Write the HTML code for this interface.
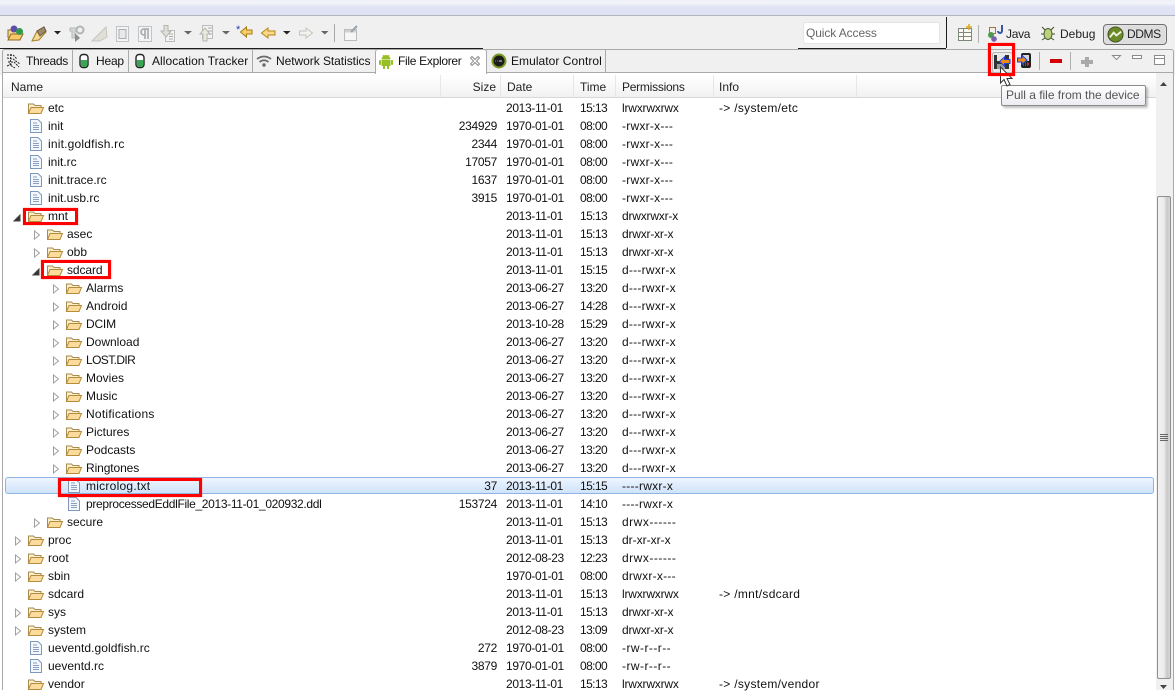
<!DOCTYPE html>
<html><head><meta charset="utf-8">
<style>
html,body{margin:0;padding:0;background:#fff}
body{width:1175px;height:690px;position:relative;overflow:hidden;font-family:"Liberation Sans",sans-serif;font-size:12px;color:#111}
.a{position:absolute}
.r{position:absolute;left:0;width:1155px;height:18px;line-height:18px;white-space:nowrap}
.r span{position:absolute;top:0}
.r svg{position:absolute;top:1px}
.r svg.ar{top:5px}
.r svg.ex{top:7px}
.s{right:658px;letter-spacing:-.3px}
.d{left:506px;letter-spacing:-.35px}
.t{left:580px;letter-spacing:-.6px}
.p{left:622px;letter-spacing:-.2px}
.q{left:622px;letter-spacing:.25px}
.i{left:719px;letter-spacing:.3px}
.tab{position:absolute;top:50px;height:22px;line-height:22px;white-space:nowrap}
.tab span{position:absolute;top:0}
.hd{position:absolute;top:79px;line-height:16px;color:#222}
.sep{position:absolute;top:75px;width:1px;height:22px;background:#e6e6e6}
.rb{position:absolute;border:3px solid #f00;box-sizing:border-box;box-shadow:0 0 1px #f66}
</style></head><body>
<svg width="0" height="0" style="position:absolute">
<defs>
<symbol id="fo" viewBox="0 0 18 16"><path d="M1.500 13.500V4h5l1.500 1.500H14V7" fill="#fbeecb" stroke="#a98a4f"/><path d="M1.500 13.500L4 7.500H16.500L14 13.500Z" fill="#fbdc9c" stroke="#b58c3c"/></symbol>
<symbol id="fi" viewBox="0 0 16 16"><path d="M2.500 1.500H10L13.500 5V14.500H2.500Z" fill="#f3f6fb" stroke="#7f97bb"/><path d="M5 5H9M5 7.500H11M5 9.500H11M5 11.500H11" stroke="#8aa0c2"/></symbol>
<symbol id="ar" viewBox="0 0 8 10"><path d="M1.500 1V9L6.500 5Z" fill="#fff" stroke="#a0a0a0"/></symbol>
<symbol id="ex" viewBox="0 0 8 8"><path d="M7 1V7H1Z" fill="#333" stroke="#444"/></symbol>
<symbol id="can" viewBox="0 0 12 16"><rect x="2" y="1.500" width="8" height="13" rx="3" fill="#fff" stroke="#222" stroke-width="1.400"/><path d="M2.800 7H9.200V12a2 2 0 0 1-2 2H4.800a2 2 0 0 1-2-2Z" fill="#3aa655"/></symbol>
<symbol id="droid" viewBox="0 0 16 16"><path d="M3.500 6.500a4.500 4.500 0 0 1 9 0Z" fill="#97c024"/><path d="M5 2L6 3.500M11 2L10 3.500" stroke="#97c024"/><rect x="3.500" y="7" width="9" height="6" fill="#97c024"/><rect x="1" y="7" width="2" height="5" rx="1" fill="#97c024"/><rect x="13" y="7" width="2" height="5" rx="1" fill="#97c024"/><rect x="5" y="13" width="2" height="3" fill="#97c024"/><rect x="9" y="13" width="2" height="3" fill="#97c024"/></symbol>
</defs></svg>

<!-- top band -->
<div class="a" style="left:0;top:0;width:1175px;height:15px;background:linear-gradient(#eef0f8 0,#f4f5fb 3px,#dfe3f3 7px,#dfe3f3 100%)"></div>
<div class="a" style="left:0;top:15px;width:1175px;height:1px;background:#b3b3bb"></div>
<div class="a" style="left:0;top:16px;width:1175px;height:59px;background:#f0f0f0"></div>

<!-- toolbar icons -->
<svg class="a" style="left:0;top:16px" width="360" height="34" viewBox="0 0 360 34">
<path d="M8 22V14h5l1 1h6v5" fill="#f6d98f" stroke="#8f6a22"/><path d="M8 24L11 18H23L20 24Z" fill="#f8c96b" stroke="#8f6a22"/><circle cx="14" cy="13" r="3.500" fill="#5d4fa8"/><circle cx="19.500" cy="15.500" r="3.500" fill="#2f9a4f"/>
<path d="M32 25L37 15L44 11L46 16L39 24Z" fill="#f5d98e" stroke="#a4812f"/><path d="M37 15L44 11L46 15L40 20Z" fill="#a08a6c" stroke="#6d5b47"/><path d="M54 15H61L57.500 18.500Z" fill="#222"/>
<path d="M70 12H77V15H75V22H72V15H70Z" fill="#d5d8d8" stroke="#b5b9b9"/><circle cx="80" cy="14" r="3.500" fill="none" stroke="#b0b5b5" stroke-width="2"/><path d="M75 17V26L80 22Z" fill="#8d8d8d"/>
<path d="M92 25L106 11L107 21L100 25Z" fill="#dfdfd8" stroke="#c6c6c0"/>
<rect x="116.500" y="10.500" width="12" height="15" fill="#f4f4f4" stroke="#c0c4c6"/><rect x="119" y="13.500" width="7" height="9" fill="#e8e8e8" stroke="#a9aeb0"/>
<rect x="138.500" y="10.500" width="13" height="15" fill="#f4f4f4" stroke="#c0c4c6"/><path d="M145 13V23M148 13V23M149 13H144a3 3 0 0 0 0 6h1" fill="none" stroke="#a5a9ac" stroke-width="1.600"/>
<rect x="165.500" y="14.500" width="9" height="11" fill="#f4f4f4" stroke="#bbb"/><path d="M164 9.500H168V15H171L166 21L161 15H164Z" fill="#e0e0da" stroke="#b5b5ad"/><path d="M169 18H173M169 20.500H173M169 23H173" stroke="#aaa"/>
<path d="M184 15H192L188 18.500Z" fill="#666"/>
<rect x="202.500" y="9.500" width="10" height="13" fill="#f4f4f4" stroke="#bbb"/><path d="M203 25V18H200L205 12L210 18H207V25Z" fill="#e9e9e0" stroke="#b5b5ad"/><path d="M208 12H212M208 15H212M208 18H212" stroke="#aaa"/>
<path d="M222 15H230L226 18.500Z" fill="#666"/>
<path d="M240.500 16L246.500 11V14H252V18H246.500V21Z" fill="#f8cf6b" stroke="#a77a14"/><text x="236" y="17" font-size="11" fill="#2a3fb0" font-family="Liberation Sans">*</text>
<path d="M261.500 17L268 12V15H275V19H268V22Z" fill="#fbd98b" stroke="#b58414"/>
<path d="M283 15H290.500L286.800 18.500Z" fill="#222"/>
<path d="M312.500 17L306 12V15H299.500V19H306V22Z" fill="#f2f2ee" stroke="#c3c3bc"/>
<path d="M321 15H328.500L324.800 18.500Z" fill="#666"/>
<rect x="334" y="8" width="1" height="18" fill="#a8a8a8"/>
<rect x="344.500" y="13.500" width="12" height="11" fill="#f6f6f6" stroke="#bbb"/><rect x="345" y="14" width="11" height="2.500" fill="#d0d3d6"/><path d="M351 16L357 10" stroke="#9aa2a6" stroke-width="2"/>
</svg>

<!-- black line under toolbar -->
<div class="a" style="left:0;top:48px;width:483px;height:1px;background:#1c1c1c"></div>
<div class="a" style="left:798px;top:48px;width:148px;height:1px;background:#1c1c1c"></div>
<div class="a" style="left:946px;top:17px;width:1px;height:31px;background:#1c1c1c"></div>

<!-- quick access -->
<div class="a" style="left:803px;top:22px;width:135px;height:20px;background:#fff;border:1px solid #e4e4e4;border-radius:2px;line-height:20px;color:#666;text-indent:2px;font-size:12px;letter-spacing:-.1px">Quick Access</div>

<!-- perspectives -->
<svg class="a" style="left:950px;top:16px" width="150" height="34" viewBox="0 0 150 34">
<rect x="8.500" y="12.500" width="13" height="12" fill="#fdfdf5" stroke="#7d8a7b"/><path d="M8 16.500H21M13.500 12V24M8 20.500H21" stroke="#7d8a7b"/><path d="M19 8V14M16 11H22" stroke="#e0a818" stroke-width="1.500"/>
<rect x="28" y="9" width="1" height="18" fill="#b0b0b0"/>
<rect x="39.500" y="11.500" width="6" height="6" fill="none" stroke="#a5743a"/><circle cx="41" cy="19" r="3" fill="#4f9a4e"/><circle cx="44" cy="23" r="2.800" fill="#7c5cad"/><path d="M52 9V15a2 2 0 0 1-4 0" fill="none" stroke="#3556a6" stroke-width="2"/>
<ellipse cx="98" cy="18" rx="4" ry="5.500" fill="#bcd27a" stroke="#495b2a"/><path d="M92 11L95 14M104 11L101 14M91 18H94M105 18H102M92 24L95 22M104 24L101 22" stroke="#3f4a2f"/>
</svg>
<div class="a" style="left:1006px;top:26px;line-height:16px;color:#222;letter-spacing:-.3px">Java</div>
<div class="a" style="left:1060px;top:26px;line-height:16px;color:#222">Debug</div>
<div class="a" style="left:1103px;top:24px;width:62px;height:19px;border:1px solid #6f6f6f;border-radius:4px;background:rgba(205,205,205,.55);box-shadow:inset 0 0 1px #fff"></div>
<div class="a" style="left:1127px;top:26px;line-height:16px;color:#222;letter-spacing:-.4px">DDMS</div>
<svg class="a" style="left:1107px;top:26px" width="17" height="17" viewBox="0 0 18 18"><circle cx="9" cy="9" r="8" fill="#6a8a2a" stroke="#3f4f1d"/><path d="M3 12L7 7L10 10L15 6" fill="none" stroke="#f0f3de" stroke-width="2"/></svg>

<!-- panel frame -->
<div class="a" style="left:2px;top:49px;width:1172px;height:641px;border:1px solid #a9a9a9;border-bottom:0;border-radius:3px 3px 0 0;box-sizing:border-box"></div>
<div class="a" style="left:3px;top:72px;width:1170px;height:1px;background:#a9a9a9"></div>
<div class="a" style="left:3px;top:73px;width:1170px;height:617px;background:#fff"></div>

<!-- tabs -->
<div class="a" style="left:72px;top:50px;width:1px;height:22px;background:#a9a9a9"></div>
<div class="a" style="left:128px;top:50px;width:1px;height:22px;background:#a9a9a9"></div>
<div class="a" style="left:252px;top:50px;width:1px;height:22px;background:#a9a9a9"></div>
<div class="a" style="left:375px;top:49px;width:112px;height:25px;background:#fff;border:1px solid #a9a9a9;border-bottom:0;border-radius:3px 3px 0 0;box-sizing:border-box"></div>
<div class="a" style="left:605px;top:50px;width:1px;height:22px;background:#a9a9a9"></div>
<div class="tab" style="left:0"><span style="left:26px;letter-spacing:-.3px">Threads</span><span style="left:96px;letter-spacing:-.2px">Heap</span><span style="left:152px;letter-spacing:.05px">Allocation Tracker</span><span style="left:276px;letter-spacing:-.05px">Network Statistics</span><span style="left:398px;letter-spacing:-.3px">File Explorer</span><span style="left:511px;letter-spacing:.05px">Emulator Control</span></div>
<svg class="a" style="left:6px;top:53px" width="16" height="16" viewBox="0 0 16 16"><path d="M1 2L7 2L11 6M1 5L7 6L14 11M2 9L8 9L13 14M5 1L4 12L9 15M1 13L6 11" fill="none" stroke="#222" stroke-dasharray="2 1"/></svg>
<svg class="a" style="left:78px;top:53px" width="13" height="16"><use href="#can" width="12" height="16"/></svg>
<svg class="a" style="left:134px;top:53px" width="13" height="16"><use href="#can" width="12" height="16"/></svg>
<svg class="a" style="left:256px;top:54px" width="16" height="14" viewBox="0 0 16 14"><path d="M1 5Q8 0 15 5M3.500 8Q8 4.500 12.500 8" fill="none" stroke="#6a6a6a" stroke-width="1.800"/><circle cx="8" cy="11" r="1.700" fill="#6a6a6a"/></svg>
<svg class="a" style="left:378px;top:53px" width="16" height="16"><use href="#droid" width="16" height="16"/></svg>
<svg class="a" style="left:469px;top:55px" width="12" height="12" viewBox="0 0 12 12"><path d="M1.500 3L3 1.500L6 4.500L9 1.500L10.500 3L7.500 6L10.500 9L9 10.500L6 7.500L3 10.500L1.500 9L4.500 6Z" fill="#fff" stroke="#8d8d8d"/></svg>
<svg class="a" style="left:491px;top:53px" width="16" height="16" viewBox="0 0 16 16"><circle cx="8" cy="8" r="7.500" fill="#7d9a24"/><circle cx="8" cy="8" r="5.500" fill="#1c1c1c"/><path d="M4.500 8H5M6.300 8H6.800M8 8H11" stroke="#ddd"/></svg>

<!-- view toolbar -->
<svg class="a" style="left:988px;top:50px" width="187" height="25" viewBox="0 0 187 25">
<rect x="4.500" y="2.500" width="20" height="20" rx="2" fill="#e9e9e9" stroke="#b6b6b6"/>
<path d="M6 5H21V19H6Z" fill="#333"/><rect x="9" y="5" width="8" height="6" fill="#e8e8e8"/><rect x="9" y="14" width="8" height="5" fill="#9a9a9a"/>
<path d="M11.500 11.500L16.500 7V9.500H22V13.500H16.500V16Z" fill="#f08a12" stroke="#1e40d8"/>
<rect x="33" y="3" width="10" height="15" rx="2" fill="#222"/><rect x="35" y="5" width="6" height="6" fill="#d6d6e4"/><path d="M35 13H41M35 15H41" stroke="#888" stroke-dasharray="1 1"/><rect x="39" y="13" width="2" height="2" fill="#d22"/>
<path d="M39 10L34 5.500V8H29.500V12H34V14.500Z" fill="#f08a12" stroke="#1e40d8"/>
<rect x="51" y="2" width="1" height="18" fill="#b0b0b0"/>
<rect x="62" y="9" width="12" height="4" fill="#d20000"/>
<rect x="82" y="2" width="1" height="18" fill="#b0b0b0"/>
<path d="M97 7H101V10H105V14H101V17H97V14H93V10H97Z" fill="#a9a9a9"/>
<path d="M124.500 5.500H132.500L128.500 9.500Z" fill="#fff" stroke="#8a8a8a"/>
<rect x="144.500" y="5.500" width="9" height="3" fill="#fff" stroke="#8a8a8a"/>
<rect x="166.500" y="5.500" width="10" height="9" fill="#fff" stroke="#8a8a8a"/><path d="M166 8.500H176" stroke="#8a8a8a"/>
</svg>

<!-- table header -->
<div class="a" style="left:3px;top:75px;width:1153px;height:22px;background:linear-gradient(#fff,#fafafa 40%,#f1f1f1)"></div>
<div class="a" style="left:3px;top:97px;width:1153px;height:1px;background:#d8d8d8"></div>
<div class="sep" style="left:440px"></div><div class="sep" style="left:500px"></div><div class="sep" style="left:573px"></div><div class="sep" style="left:615px"></div><div class="sep" style="left:713px"></div><div class="sep" style="left:856px"></div>
<div class="hd" style="left:11px">Name</div>
<div class="hd" style="right:679px">Size</div>
<div class="hd" style="left:507px">Date</div>
<div class="hd" style="left:580px">Time</div>
<div class="hd" style="left:622px;letter-spacing:-.25px">Permissions</div>
<div class="hd" style="left:719px">Info</div>

<!-- selection -->
<div class="a" style="left:5px;top:477px;width:1149px;height:17px;box-sizing:border-box;border:1px solid #8fb4e4;border-radius:3px;background:linear-gradient(#eef5fe,#cfe3fb)"></div>

<!-- rows -->
<div class="r" style="top:99px"><svg style="left:27px" width="18" height="16"><use href="#fo"/></svg><span style="left:48px">etc</span><span class="d">2013-11-01</span><span class="t">15:13</span><span class="p">lrwxrwxrwx</span><span class="i">-&gt; /system/etc</span></div>
<div class="r" style="top:117px"><svg style="left:28px" width="16" height="16"><use href="#fi"/></svg><span style="left:48px">init</span><span class="s">234929</span><span class="d">1970-01-01</span><span class="t">08:00</span><span class="q">-rwxr-x---</span></div>
<div class="r" style="top:135px"><svg style="left:28px" width="16" height="16"><use href="#fi"/></svg><span style="left:48px;letter-spacing:.2px">init.goldfish.rc</span><span class="s">2344</span><span class="d">1970-01-01</span><span class="t">08:00</span><span class="q">-rwxr-x---</span></div>
<div class="r" style="top:153px"><svg style="left:28px" width="16" height="16"><use href="#fi"/></svg><span style="left:48px">init.rc</span><span class="s">17057</span><span class="d">1970-01-01</span><span class="t">08:00</span><span class="q">-rwxr-x---</span></div>
<div class="r" style="top:171px"><svg style="left:28px" width="16" height="16"><use href="#fi"/></svg><span style="left:48px">init.trace.rc</span><span class="s">1637</span><span class="d">1970-01-01</span><span class="t">08:00</span><span class="q">-rwxr-x---</span></div>
<div class="r" style="top:189px"><svg style="left:28px" width="16" height="16"><use href="#fi"/></svg><span style="left:48px">init.usb.rc</span><span class="s">3915</span><span class="d">1970-01-01</span><span class="t">08:00</span><span class="q">-rwxr-x---</span></div>
<div class="r" style="top:207px"><svg class="ex" style="left:13px" width="8" height="8"><use href="#ex"/></svg><svg style="left:27px" width="18" height="16"><use href="#fo"/></svg><span style="left:48px">mnt</span><span class="d">2013-11-01</span><span class="t">15:13</span><span class="p">drwxrwxr-x</span></div>
<div class="r" style="top:225px"><svg class="ar" style="left:33px" width="8" height="10"><use href="#ar"/></svg><svg style="left:46px" width="18" height="16"><use href="#fo"/></svg><span style="left:67px">asec</span><span class="d">2013-11-01</span><span class="t">15:13</span><span class="p">drwxr-xr-x</span></div>
<div class="r" style="top:243px"><svg class="ar" style="left:33px" width="8" height="10"><use href="#ar"/></svg><svg style="left:46px" width="18" height="16"><use href="#fo"/></svg><span style="left:67px">obb</span><span class="d">2013-11-01</span><span class="t">15:13</span><span class="p">drwxr-xr-x</span></div>
<div class="r" style="top:261px"><svg class="ex" style="left:32px" width="8" height="8"><use href="#ex"/></svg><svg style="left:46px" width="18" height="16"><use href="#fo"/></svg><span style="left:67px;letter-spacing:-.1px">sdcard</span><span class="d">2013-11-01</span><span class="t">15:15</span><span class="q">d---rwxr-x</span></div>
<div class="r" style="top:279px"><svg class="ar" style="left:52px" width="8" height="10"><use href="#ar"/></svg><svg style="left:65px" width="18" height="16"><use href="#fo"/></svg><span style="left:86px">Alarms</span><span class="d">2013-06-27</span><span class="t">13:20</span><span class="q">d---rwxr-x</span></div>
<div class="r" style="top:297px"><svg class="ar" style="left:52px" width="8" height="10"><use href="#ar"/></svg><svg style="left:65px" width="18" height="16"><use href="#fo"/></svg><span style="left:86px">Android</span><span class="d">2013-06-27</span><span class="t">14:28</span><span class="q">d---rwxr-x</span></div>
<div class="r" style="top:315px"><svg class="ar" style="left:52px" width="8" height="10"><use href="#ar"/></svg><svg style="left:65px" width="18" height="16"><use href="#fo"/></svg><span style="left:86px;letter-spacing:-.2px">DCIM</span><span class="d">2013-10-28</span><span class="t">15:29</span><span class="q">d---rwxr-x</span></div>
<div class="r" style="top:333px"><svg class="ar" style="left:52px" width="8" height="10"><use href="#ar"/></svg><svg style="left:65px" width="18" height="16"><use href="#fo"/></svg><span style="left:86px">Download</span><span class="d">2013-06-27</span><span class="t">13:20</span><span class="q">d---rwxr-x</span></div>
<div class="r" style="top:351px"><svg class="ar" style="left:52px" width="8" height="10"><use href="#ar"/></svg><svg style="left:65px" width="18" height="16"><use href="#fo"/></svg><span style="left:86px;letter-spacing:-.6px">LOST.DIR</span><span class="d">2013-06-27</span><span class="t">13:20</span><span class="q">d---rwxr-x</span></div>
<div class="r" style="top:369px"><svg class="ar" style="left:52px" width="8" height="10"><use href="#ar"/></svg><svg style="left:65px" width="18" height="16"><use href="#fo"/></svg><span style="left:86px">Movies</span><span class="d">2013-06-27</span><span class="t">13:20</span><span class="q">d---rwxr-x</span></div>
<div class="r" style="top:387px"><svg class="ar" style="left:52px" width="8" height="10"><use href="#ar"/></svg><svg style="left:65px" width="18" height="16"><use href="#fo"/></svg><span style="left:86px">Music</span><span class="d">2013-06-27</span><span class="t">13:20</span><span class="q">d---rwxr-x</span></div>
<div class="r" style="top:405px"><svg class="ar" style="left:52px" width="8" height="10"><use href="#ar"/></svg><svg style="left:65px" width="18" height="16"><use href="#fo"/></svg><span style="left:86px;letter-spacing:.25px">Notifications</span><span class="d">2013-06-27</span><span class="t">13:20</span><span class="q">d---rwxr-x</span></div>
<div class="r" style="top:423px"><svg class="ar" style="left:52px" width="8" height="10"><use href="#ar"/></svg><svg style="left:65px" width="18" height="16"><use href="#fo"/></svg><span style="left:86px">Pictures</span><span class="d">2013-06-27</span><span class="t">13:20</span><span class="q">d---rwxr-x</span></div>
<div class="r" style="top:441px"><svg class="ar" style="left:52px" width="8" height="10"><use href="#ar"/></svg><svg style="left:65px" width="18" height="16"><use href="#fo"/></svg><span style="left:86px">Podcasts</span><span class="d">2013-06-27</span><span class="t">13:20</span><span class="q">d---rwxr-x</span></div>
<div class="r" style="top:459px"><svg class="ar" style="left:52px" width="8" height="10"><use href="#ar"/></svg><svg style="left:65px" width="18" height="16"><use href="#fo"/></svg><span style="left:86px;letter-spacing:-.1px">Ringtones</span><span class="d">2013-06-27</span><span class="t">13:20</span><span class="q">d---rwxr-x</span></div>
<div class="r" style="top:477px"><svg style="left:66px" width="16" height="16"><use href="#fi"/></svg><span style="left:86px;letter-spacing:.25px">microlog.txt</span><span class="s">37</span><span class="d">2013-11-01</span><span class="t">15:15</span><span class="q">----rwxr-x</span></div>
<div class="r" style="top:495px"><svg style="left:66px" width="16" height="16"><use href="#fi"/></svg><span style="left:86px;letter-spacing:-.33px">preprocessedEddlFile_2013-11-01_020932.ddl</span><span class="s">153724</span><span class="d">2013-11-01</span><span class="t">14:10</span><span class="q">----rwxr-x</span></div>
<div class="r" style="top:513px"><svg class="ar" style="left:33px" width="8" height="10"><use href="#ar"/></svg><svg style="left:46px" width="18" height="16"><use href="#fo"/></svg><span style="left:67px">secure</span><span class="d">2013-11-01</span><span class="t">15:13</span><span class="q" style="letter-spacing:.5px">drwx------</span></div>
<div class="r" style="top:531px"><svg class="ar" style="left:14px" width="8" height="10"><use href="#ar"/></svg><svg style="left:27px" width="18" height="16"><use href="#fo"/></svg><span style="left:48px">proc</span><span class="d">2013-11-01</span><span class="t">15:13</span><span class="p" style="letter-spacing:0">dr-xr-xr-x</span></div>
<div class="r" style="top:549px"><svg class="ar" style="left:14px" width="8" height="10"><use href="#ar"/></svg><svg style="left:27px" width="18" height="16"><use href="#fo"/></svg><span style="left:48px">root</span><span class="d">2012-08-23</span><span class="t">12:23</span><span class="q" style="letter-spacing:.5px">drwx------</span></div>
<div class="r" style="top:567px"><svg class="ar" style="left:14px" width="8" height="10"><use href="#ar"/></svg><svg style="left:27px" width="18" height="16"><use href="#fo"/></svg><span style="left:48px">sbin</span><span class="d">1970-01-01</span><span class="t">08:00</span><span class="q">drwxr-x---</span></div>
<div class="r" style="top:585px"><svg style="left:27px" width="18" height="16"><use href="#fo"/></svg><span style="left:48px">sdcard</span><span class="d">2013-11-01</span><span class="t">15:13</span><span class="p">lrwxrwxrwx</span><span class="i">-&gt; /mnt/sdcard</span></div>
<div class="r" style="top:603px"><svg class="ar" style="left:14px" width="8" height="10"><use href="#ar"/></svg><svg style="left:27px" width="18" height="16"><use href="#fo"/></svg><span style="left:48px">sys</span><span class="d">2013-11-01</span><span class="t">15:13</span><span class="p">drwxr-xr-x</span></div>
<div class="r" style="top:621px"><svg class="ar" style="left:14px" width="8" height="10"><use href="#ar"/></svg><svg style="left:27px" width="18" height="16"><use href="#fo"/></svg><span style="left:48px">system</span><span class="d">2012-08-23</span><span class="t">13:09</span><span class="p">drwxr-xr-x</span></div>
<div class="r" style="top:639px"><svg style="left:28px" width="16" height="16"><use href="#fi"/></svg><span style="left:48px;letter-spacing:.06px">ueventd.goldfish.rc</span><span class="s">272</span><span class="d">1970-01-01</span><span class="t">08:00</span><span class="q" style="letter-spacing:.45px">-rw-r--r--</span></div>
<div class="r" style="top:657px"><svg style="left:28px" width="16" height="16"><use href="#fi"/></svg><span style="left:48px">ueventd.rc</span><span class="s">3879</span><span class="d">1970-01-01</span><span class="t">08:00</span><span class="q" style="letter-spacing:.45px">-rw-r--r--</span></div>
<div class="r" style="top:675px"><svg style="left:27px" width="18" height="16"><use href="#fo"/></svg><span style="left:48px">vendor</span><span class="d">2013-11-01</span><span class="t">15:13</span><span class="p">lrwxrwxrwx</span><span class="i">-&gt; /system/vendor</span></div>

<!-- scrollbar -->
<div class="a" style="left:1156px;top:73px;width:17px;height:617px;background:#f0f0f0"></div>
<div class="a" style="left:1157px;top:196px;width:14px;height:483px;box-sizing:border-box;border:1px solid #8f8f8f;border-radius:2px;background:linear-gradient(90deg,#f2f2f2,#ebebeb 50%,#c9c9c9 75%,#d6d6d6)"></div>
<svg class="a" style="left:1156px;top:78px" width="15" height="12"><path d="M4 8L7.500 4L11 8Z" fill="#444"/></svg>
<svg class="a" style="left:1156px;top:683px" width="15" height="7"><path d="M4 2H11L7.500 6Z" fill="#444"/></svg>
<svg class="a" style="left:1160px;top:433px" width="9" height="10"><path d="M0 1.500H8M0 3.500H8M0 5.500H8M0 7.500H8" stroke="#666"/></svg>

<!-- tooltip -->
<div class="a" style="left:1001px;top:85px;width:145px;height:21px;box-sizing:border-box;border:1px solid #8a8a8a;border-radius:2px;background:linear-gradient(#fff,#ececf2);box-shadow:2px 2px 2px rgba(0,0,0,.25);line-height:19px;color:#555;font-size:12px;text-indent:4px;white-space:nowrap;letter-spacing:-.02px">Pull a file from the device</div>

<!-- cursor -->
<svg class="a" style="left:999px;top:66px" width="14" height="22" viewBox="0 0 14 22"><path d="M1.500 1V17L5 13.500L8 20L11 18.500L8 12.500H13Z" fill="#fff" stroke="#333"/></svg>

<!-- red annotations -->
<div class="rb" style="left:988px;top:43px;width:27px;height:33px"></div>
<div class="rb" style="left:23px;top:208px;width:55px;height:17px"></div>
<div class="rb" style="left:41px;top:260px;width:70px;height:19px"></div>
<div class="rb" style="left:58px;top:478px;width:144px;height:19px"></div>
</body></html>
